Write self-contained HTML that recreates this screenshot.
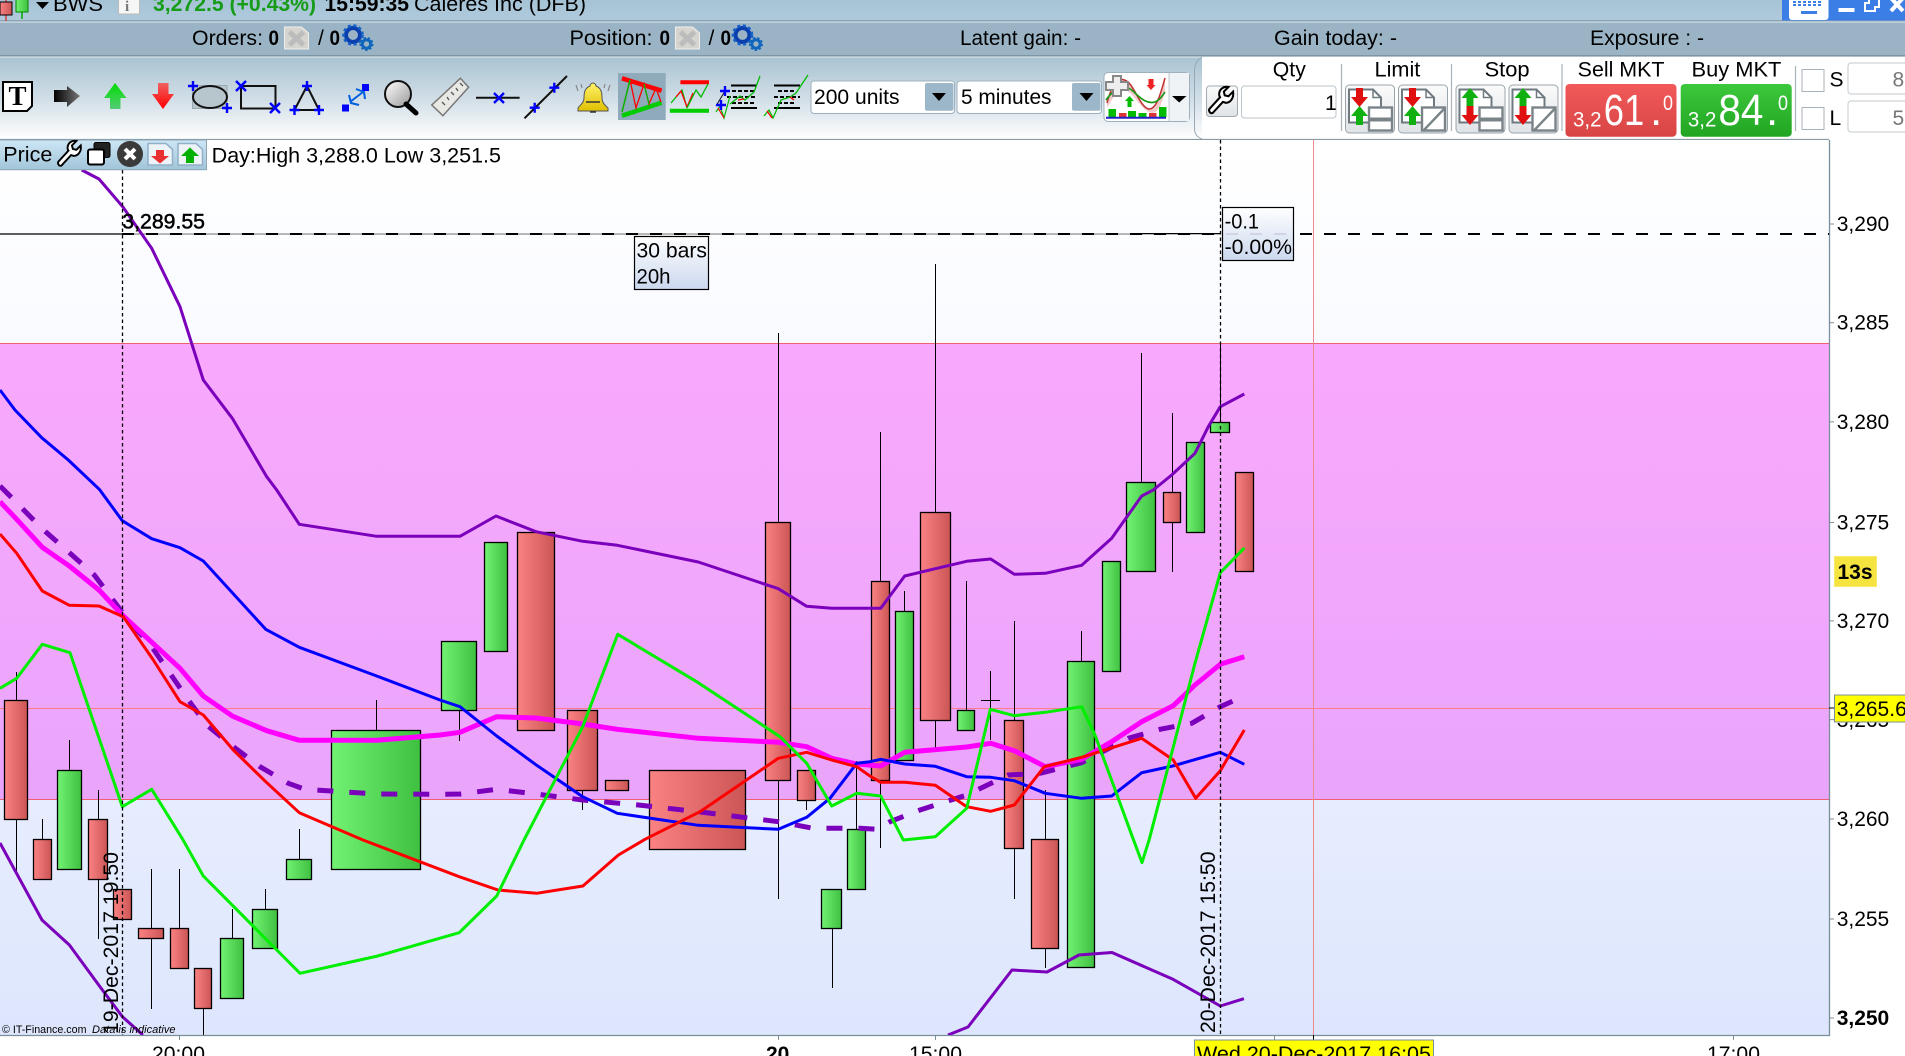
<!DOCTYPE html>
<html><head><meta charset="utf-8"><title>BWS Chart</title>
<style>
html,body{margin:0;padding:0;background:#fff;width:1905px;height:1056px;overflow:hidden}
svg{display:block}
text{font-family:"Liberation Sans",sans-serif;font-size:21px;fill:#000}
.b{font-weight:bold}
.r{fill:url(#rg);stroke:#000;stroke-width:1.3}
.g{fill:url(#gg);stroke:#000;stroke-width:1.3}
.l{fill:none;stroke-linejoin:round;stroke-linecap:butt}
.cross{stroke:#0000ff;stroke-width:2.4;fill:none}
</style></head><body>
<svg width="1905" height="1056" viewBox="0 0 1905 1056" xmlns="http://www.w3.org/2000/svg">
<defs>
<linearGradient id="rg"><stop offset="0" stop-color="#fb8282"/><stop offset="1" stop-color="#cb5555"/></linearGradient>
<linearGradient id="gg"><stop offset="0" stop-color="#72f272"/><stop offset="1" stop-color="#40c040"/></linearGradient>
<linearGradient id="bgc" x1="0" y1="0" x2="0" y2="1"><stop offset="0" stop-color="#ffffff"/><stop offset=".25" stop-color="#f8faff"/><stop offset="1" stop-color="#dde6fd"/></linearGradient>
<linearGradient id="pk" x1="0" y1="0" x2="0" y2="1"><stop offset="0" stop-color="#f9a9fd"/><stop offset="1" stop-color="#e9a5fb"/></linearGradient>
<linearGradient id="top1" x1="0" y1="0" x2="0" y2="1"><stop offset="0" stop-color="#a6c3d6"/><stop offset="1" stop-color="#afcadc"/></linearGradient>
<linearGradient id="tb" x1="0" y1="0" x2="0" y2="1"><stop offset="0" stop-color="#a9c3d2"/><stop offset=".55" stop-color="#d4e0e8"/><stop offset="1" stop-color="#ffffff"/></linearGradient>
<linearGradient id="tab" x1="0" y1="0" x2="0" y2="1"><stop offset="0" stop-color="#cde6f5"/><stop offset="1" stop-color="#a2c5d9"/></linearGradient>
<linearGradient id="tip" x1="0" y1="0" x2="0" y2="1"><stop offset="0" stop-color="#ffffff"/><stop offset="1" stop-color="#cbd8ee"/></linearGradient>
<linearGradient id="sell" x1="0" y1="0" x2="0" y2="1"><stop offset="0" stop-color="#f25a5a"/><stop offset="1" stop-color="#d84444"/></linearGradient>
<linearGradient id="buy" x1="0" y1="0" x2="0" y2="1"><stop offset="0" stop-color="#3cc83c"/><stop offset="1" stop-color="#22a522"/></linearGradient>
<linearGradient id="btn" x1="0" y1="0" x2="0" y2="1"><stop offset="0" stop-color="#fbfbfb"/><stop offset="1" stop-color="#dfe3e6"/></linearGradient>
<linearGradient id="ua" x1="0" y1="0" x2="0" y2="1"><stop offset="0" stop-color="#00dd00"/><stop offset="1" stop-color="#55cc77"/></linearGradient>
<linearGradient id="da" x1="0" y1="1" x2="0" y2="0"><stop offset="0" stop-color="#ff0000"/><stop offset="1" stop-color="#f06060"/></linearGradient>
<linearGradient id="ka"><stop offset="0" stop-color="#000"/><stop offset="1" stop-color="#777"/></linearGradient>
<linearGradient id="bell" x1="0" y1="0" x2="0" y2="1"><stop offset="0" stop-color="#fff26a"/><stop offset="1" stop-color="#e0c000"/></linearGradient>
<linearGradient id="mag" x1="0" y1="0" x2="1" y2="1"><stop offset="0" stop-color="#ffffff"/><stop offset="1" stop-color="#999"/></linearGradient>
<clipPath id="ch"><rect x="0" y="140" width="1829" height="895"/></clipPath>
<g id="wr"><path d="M27 5l-5 5-4-1-1-4 5-5c-5-1-10 2-10 8 0 1 0 2 1 3L2 23c-2 2 0 6 3 5l11-12c1 0 2 1 3 1 5 0 9-5 8-12z"/></g>
<g id="gear"><circle cx="353" cy="35" r="7" fill="none" stroke="#0b3fae" stroke-width="4"/><circle cx="353" cy="35" r="9.5" fill="none" stroke="#1560c8" stroke-width="2.6" stroke-dasharray="3 2.6"/><circle cx="366.5" cy="44" r="4.2" fill="none" stroke="#0f66bb" stroke-width="3"/><circle cx="366.5" cy="44" r="6" fill="none" stroke="#0f66bb" stroke-width="2" stroke-dasharray="2.2 2"/></g>
<g id="xdoc"><path d="M0 0H17L24 6V22H0Z" fill="#d6d4ce" stroke="#eeeeea"/><path d="M5 5L19 18M19 5L5 18" stroke="#bcbcbc" stroke-width="5"/></g>
<g id="doc"><rect x="0.5" y="0.5" width="49" height="48" rx="4" fill="url(#btn)" stroke="#9aa5ab"/><path d="M4 5H28L36 13V38H4Z" fill="#fff" stroke="#6f7a80" stroke-width="2"/><path d="M28 5V13H36" fill="none" stroke="#6f7a80" stroke-width="1.5"/><rect x="24" y="23" width="23" height="23" fill="#fff" stroke="#7a8488" stroke-width="2.4"/></g>
<path id="dn" d="M0 9H5V0H12V9H17L8.5 19Z"/>
<path id="up" d="M0 10H5V19H12V10H17L8.5 0Z"/>
</defs>

<!-- top rows -->
<rect width="1905" height="21" fill="url(#top1)"/>
<rect y="20" width="1905" height="2" fill="#8ba2b0"/>
<rect y="21.5" width="1905" height="1" fill="#dfe8ee"/>
<rect y="22.5" width="1905" height="33" fill="#9ab4c6"/>
<rect y="55" width="1905" height="1.5" fill="#7f95a2"/>
<rect y="56.5" width="1905" height="83" fill="url(#tb)"/>
<rect y="56.5" width="1905" height="1" fill="#e2ebf0"/>

<!-- row1 -->
<path d="M6 0V21" stroke="#c44" stroke-width="1.5"/><rect x="0" y="2" width="12" height="13" fill="url(#rg)" stroke="#000"/>
<path d="M22 0V19" stroke="#0a0" stroke-width="1.5"/><rect x="16" y="-1" width="12" height="13" fill="url(#gg)" stroke="#080"/>
<path d="M36 2H49L42.5 9Z" fill="#000"/>
<text x="53" y="11" textLength="50" lengthAdjust="spacingAndGlyphs">BWS</text>
<rect x="118.5" y="-2" width="21" height="16" fill="#f6f6f6" stroke="#bbb"/><text x="125" y="11" style="font-family:'Liberation Serif',serif;font-size:15px;font-weight:bold;fill:#777">i</text>
<text x="153" y="11" class="b" style="fill:#169c16" textLength="163" lengthAdjust="spacingAndGlyphs">3,272.5 (+0.43%)</text>
<text x="324.5" y="11" class="b" textLength="84.5" lengthAdjust="spacingAndGlyphs">15:59:35</text>
<text x="414" y="11" textLength="172" lengthAdjust="spacingAndGlyphs">Caleres Inc (DFB)</text>
<rect x="1782" y="0" width="123" height="20.5" fill="#3b7fe6"/>
<rect x="1789" y="-4" width="39.5" height="24" rx="3" fill="#fff"/>
<path d="M1793 2h3M1798 2h3M1803 2h3M1808 2h3M1813 2h3M1818 2h3M1793 5h3M1798 5h3M1803 5h3M1808 5h3M1813 5h3M1818 5h3" stroke="#3b7fe6" stroke-width="2"/>
<rect x="1801" y="11" width="16" height="3" fill="#3b7fe6"/>
<rect x="1838.5" y="8" width="16" height="4" fill="#fff"/>
<path d="M1869 0V3H1865V11H1875V7H1879V0" fill="none" stroke="#fff" stroke-width="2"/>
<path d="M1891 -2L1903 11M1903 -2L1891 11" stroke="#fff" stroke-width="4"/>

<!-- row2 -->
<text x="192" y="45" textLength="71" lengthAdjust="spacingAndGlyphs">Orders:</text>
<text x="268.5" y="45" class="b" textLength="10.5" lengthAdjust="spacingAndGlyphs">0</text>
<use href="#xdoc" x="284.5" y="27"/>
<text x="318" y="45">/</text><text x="329.5" y="45" class="b" textLength="10.5" lengthAdjust="spacingAndGlyphs">0</text>
<use href="#gear"/>
<text x="569.5" y="45" textLength="83" lengthAdjust="spacingAndGlyphs">Position:</text>
<text x="659.5" y="45" class="b" textLength="10.5" lengthAdjust="spacingAndGlyphs">0</text>
<use href="#xdoc" x="675.5" y="27"/>
<text x="708.5" y="45">/</text><text x="720.5" y="45" class="b" textLength="10.5" lengthAdjust="spacingAndGlyphs">0</text>
<use href="#gear" x="389.5"/>
<text x="960" y="45" textLength="121" lengthAdjust="spacingAndGlyphs">Latent gain: -</text>
<text x="1274" y="45" textLength="123" lengthAdjust="spacingAndGlyphs">Gain today: -</text>
<text x="1590" y="45" textLength="114" lengthAdjust="spacingAndGlyphs">Exposure : -</text>

<!-- toolbar icons -->
<path d="M3 82H32V106L27 111H3Z" fill="#fff" stroke="#000" stroke-width="2"/><text x="8.5" y="105" style="font-family:'Liberation Serif',serif;font-weight:bold;font-size:27px">T</text>
<path d="M54 90H67V86L80 96L67 107V102H54Z" fill="url(#ka)"/>
<path d="M104 98L115 83L126.5 98H120.5V109H110V98Z" fill="url(#ua)"/>
<path d="M152 94H158V83H168.5V94H174L163 109Z" fill="url(#da)"/>
<rect x="192.5" y="85.5" width="34.5" height="23" fill="#b7c5cd" stroke="#9aa8b0"/>
<ellipse cx="210" cy="97" rx="17" ry="11" fill="none" stroke="#111" stroke-width="2"/>
<path class="cross" d="M193 81V91M188 86H198M227 103V113M222 108H232"/>
<rect x="241" y="86" width="34.5" height="22.5" fill="none" stroke="#111" stroke-width="2"/>
<path class="cross" d="M236 81L246 91M246 81L236 91M270 103L280 113M280 103L270 113"/>
<path d="M307 86L294.5 110H319Z" fill="none" stroke="#111" stroke-width="2"/>
<path class="cross" d="M307 81V91M302 86H312M294.5 105V115M289.5 110H299.5M319 105V115M314 110H324"/>
<rect x="362" y="84" width="7" height="7" fill="#00f"/><rect x="342" y="104.5" width="7" height="7" fill="#00f"/>
<path d="M350 102L363 92M349 95L351 103L359 105M356 89L364 92L365 99" stroke="#0060e0" stroke-width="2" fill="none"/>
<circle cx="398" cy="94" r="13" fill="url(#mag)" stroke="#111" stroke-width="2"/><path d="M406 104L416 113" stroke="#000" stroke-width="5" stroke-linecap="round"/>
<path d="M460.4 78.3L468.6 87.3L442.9 115.7L431.8 105Z" fill="#e8e8e4" stroke="#777" stroke-width="1.5"/>
<path d="M442 102l3 3M447 97l2 3M451 92l3 3M456 88l2 3M460 83l3 3" stroke="#555" stroke-width="1.3"/>
<path d="M476 97.7H519.6" stroke="#111" stroke-width="2"/><path class="cross" d="M494 93L504 103M504 93L494 103"/>
<path d="M524.5 118.3L567 76" stroke="#111" stroke-width="2"/><path class="cross" d="M534.7 102.7V112.7M529.7 107.7H539.7M554.3 82.7V92.7M549.3 87.7H559.3"/>
<path d="M593 83c-2 0-3 2-3 3-5 2-6 6-6 12 0 5-4 7-6 10v3h30v-3c-3-3-6-5-6-10 0-6-1-10-6-12 0-1-1-3-3-3z" fill="url(#bell)" stroke="#555" stroke-width="1"/><path d="M586 102H600M590 112H596" stroke="#333" stroke-width="1.5"/>
<path d="M576 85l2 6M610 85l-2 6M581 84l1 4M605 84l-1 4" stroke="#888" stroke-width="1.2"/>
<rect x="618" y="73" width="47.7" height="47" fill="#8faabb"/>
<path d="M622 78.3L661.6 90.7" stroke="#f00" stroke-width="4.5"/><path d="M622 115.7L661.6 102.7" stroke="#0c0" stroke-width="4.5"/>
<path d="M622 112L630 80L636 108L644 84L649 104L656 88L661 102" fill="none" stroke="#f00" stroke-width="1.3"/>
<path d="M622 112L630 80" stroke="#0b0" stroke-width="1.5"/><path d="M644 84L649 104" stroke="#0b0" stroke-width="1.3"/>
<path d="M680.4 82.3H709" stroke="#f00" stroke-width="4"/><path d="M669.8 110.7H709" stroke="#0c0" stroke-width="4"/>
<path d="M671 103L682 90L687 108" fill="none" stroke="#0b0" stroke-width="1.3"/><path d="M676 97L681 91L687 107L693 93" fill="none" stroke="#f00" stroke-width="1.3"/><path d="M687 108L696 90L701 97L708 84" fill="none" stroke="#0b0" stroke-width="1.3"/>
<path d="M731 85.5H757M731 108H757" stroke="#000" stroke-width="2"/>
<path d="M732 91H755M727 97H757M732 103H755" stroke="#000" stroke-width="2" stroke-dasharray="4 2"/>
<path d="M716 112L720 106L724 118L730 96" fill="none" stroke="#0b0" stroke-width="1.2"/><path d="M718 108L724 118" stroke="#f00" stroke-width="1.2"/>
<path d="M730 104L740 96L745 100L754 92L760 76" fill="none" stroke="#0b0" stroke-width="1.3"/><path d="M738 100L744 99" stroke="#f00" stroke-width="1.3"/>
<path d="M725 91L716 106" stroke="#111" stroke-width="1"/><path class="cross" d="M725 86V96M720 91H730M721 100V110M716 105H726"/>
<path d="M774 85.5H800M774 108H800" stroke="#000" stroke-width="2"/>
<path d="M778 91H796M774 97H800M778 103H796" stroke="#000" stroke-width="2" stroke-dasharray="4 2"/>
<path d="M764 116L769 110L773 118L781 100L790 97L796 93L808 75" fill="none" stroke="#0b0" stroke-width="1.3"/><path d="M767 111L772 118M790 97L794 100" stroke="#f00" stroke-width="1.3"/>

<!-- combos -->
<rect x="811" y="81" width="143.5" height="32.5" rx="3" fill="#fff" stroke="#9db0bd"/>
<rect x="925" y="83" width="28.5" height="27.7" rx="2" fill="#9bb7c9"/><path d="M932 93H946L939 101Z" fill="#000"/>
<text x="814" y="104" textLength="85.5" lengthAdjust="spacingAndGlyphs">200 units</text>
<rect x="957" y="81" width="144.5" height="32.5" rx="3" fill="#fff" stroke="#9db0bd"/>
<rect x="1072" y="83" width="28.5" height="27.7" rx="2" fill="#9bb7c9"/><path d="M1079.5 93H1093.5L1086.5 101Z" fill="#000"/>
<text x="961" y="104" textLength="90.5" lengthAdjust="spacingAndGlyphs">5 minutes</text>
<!-- indicator button -->
<rect x="1104" y="72.5" width="85.5" height="49" rx="4" fill="#fff" stroke="#9db0bd"/>
<rect x="1169" y="73" width="20" height="48" fill="#f0f3f5"/><path d="M1169 73V121" stroke="#bcc8d0"/>
<path d="M1172 96H1186.5L1179.2 102.5Z" fill="#000"/>
<path d="M1107 103C1113 80 1120 76 1128 82C1135 88 1141 108 1149 109C1157 109 1161 92 1165 78L1165 92C1160 110 1156 115 1149 112C1140 108 1132 90 1124 90C1116 90 1112 100 1107 108Z" fill="#f3c9c9"/>
<path d="M1107 103C1113 80 1120 76 1128 82C1135 88 1141 108 1149 109C1157 109 1161 92 1165 78" fill="none" stroke="#c03030" stroke-width="1.5"/>
<path d="M1106 100C1116 86 1126 84 1134 92C1142 100 1148 104 1155 102C1160 100 1162 96 1165 92" fill="none" stroke="#1a9a1a" stroke-width="1.7"/>
<path d="M1106 82H1113V76H1121V82H1128V90H1121V96H1113V90H1106Z" fill="#eee" stroke="#888" stroke-width="2"/>
<path d="M1125 101L1129.5 96L1134 101H1131.5V107H1127.5V101Z" fill="#0b0"/><path d="M1148.5 79H1153.5V85H1155.5L1151 90L1146.5 85H1148.5Z" fill="#e22"/>
<rect x="1108.5" y="109" width="7.5" height="8" fill="#0b0"/><rect x="1119" y="113" width="7.5" height="4" fill="#d33"/><rect x="1128" y="111" width="8" height="6" fill="#0b0"/><rect x="1138.5" y="113" width="8" height="4" fill="#0b0"/><rect x="1149" y="113" width="7.5" height="4" fill="#d33"/><rect x="1159" y="107" width="7.5" height="10" fill="#0b0"/>
<path d="M1106 117.7H1166" stroke="#22c" stroke-width="2"/>
<path d="M1197.5 94L1201.5 98L1197.5 102Z" fill="#000"/>

<!-- right panel -->
<path d="M1905 57H1202C1197 60 1194.5 64 1194.5 70V128C1194.5 134 1197 137 1202 139H1905Z" fill="#fff"/>
<path d="M1202 57C1197 60 1194.5 64 1194.5 70V128C1194.5 134 1197 137 1202 139" fill="url(#tb)" stroke="#95a8b4"/>
<rect x="1206.5" y="86" width="31" height="30.5" rx="3" fill="url(#btn)" stroke="#a0aab0"/>
<use href="#wr" transform="translate(1208,87) scale(.93)" fill="#fff" stroke="#000" stroke-width="2.2"/>
<rect x="1241.5" y="86" width="94.5" height="32" rx="3" fill="#fff" stroke="#bcc5ca"/>
<text x="1325" y="110">1</text>
<text x="1272.8" y="76.7" textLength="33" lengthAdjust="spacingAndGlyphs">Qty</text>
<text x="1374.5" y="76.7" textLength="45.8" lengthAdjust="spacingAndGlyphs">Limit</text>
<text x="1484.6" y="76.7" textLength="45" lengthAdjust="spacingAndGlyphs">Stop</text>
<text x="1577.7" y="76.7" textLength="86.8" lengthAdjust="spacingAndGlyphs">Sell MKT</text>
<text x="1691.5" y="76.7" textLength="89.9" lengthAdjust="spacingAndGlyphs">Buy MKT</text>
<path d="M1341.5 64V131M1451.5 64V131M1562 64V131M1795.5 66V131" stroke="#a9b4ba" stroke-width="1.2"/>
<!-- limit/stop buttons -->
<g>
<use href="#doc" x="1345" y="84.5"/><use href="#dn" x="1351" y="88" fill="#e01010"/><use href="#up" x="1351" y="106" fill="#10b010"/>
<path d="M1370 119.5H1391" stroke="#7a8488" stroke-width="4"/>
<use href="#doc" x="1398" y="84.5"/><use href="#dn" x="1404" y="88" fill="#e01010"/><use href="#up" x="1404" y="106" fill="#10b010"/>
<path d="M1423 131L1444 109" stroke="#7a8488" stroke-width="2.4"/>
<use href="#doc" x="1455.5" y="84.5"/><use href="#up" x="1461.5" y="88" fill="#10b010"/><use href="#dn" x="1461.5" y="106" fill="#e01010"/>
<path d="M1480.5 119.5H1501.5" stroke="#7a8488" stroke-width="4"/>
<use href="#doc" x="1508.5" y="84.5"/><use href="#up" x="1514.5" y="88" fill="#10b010"/><use href="#dn" x="1514.5" y="106" fill="#e01010"/>
<path d="M1533.5 131L1554.5 109" stroke="#7a8488" stroke-width="2.4"/>
</g>
<rect x="1565.5" y="84" width="111" height="52.7" rx="4" fill="url(#sell)"/>
<text x="1573" y="126.5" style="fill:#fff" textLength="28.5" lengthAdjust="spacingAndGlyphs">3,2</text>
<text x="1603.8" y="125" style="fill:#fff;font-size:44px" textLength="40.5" lengthAdjust="spacingAndGlyphs">61</text>
<text x="1650" y="125" style="fill:#fff;font-size:44px">.</text>
<text x="1663" y="110" style="fill:#fff" textLength="10" lengthAdjust="spacingAndGlyphs">0</text>
<rect x="1680.7" y="84" width="111" height="52.7" rx="4" fill="url(#buy)"/>
<text x="1687.9" y="126.5" style="fill:#fff" textLength="28.5" lengthAdjust="spacingAndGlyphs">3,2</text>
<text x="1718.4" y="125" style="fill:#fff;font-size:44px" textLength="45" lengthAdjust="spacingAndGlyphs">84</text>
<text x="1766" y="125" style="fill:#fff;font-size:44px">.</text>
<text x="1778" y="110" style="fill:#fff" textLength="10" lengthAdjust="spacingAndGlyphs">0</text>
<rect x="1802" y="69.5" width="22" height="22" fill="#fff" stroke="#a8b2b8"/>
<rect x="1802" y="107.5" width="22" height="22" fill="#fff" stroke="#a8b2b8"/>
<text x="1829.5" y="86.7">S</text><text x="1829.5" y="125">L</text>
<rect x="1848" y="63" width="70" height="31" rx="3" fill="#fff" stroke="#c2cace"/>
<rect x="1848" y="101" width="70" height="31" rx="3" fill="#fff" stroke="#c2cace"/>
<text x="1892.5" y="86.7" style="fill:#777">8</text><text x="1892.5" y="125" style="fill:#777">5</text>
<path d="M0 139.5H1829" stroke="#8a9ba5" stroke-width="1.2"/>

<!-- chart bg -->
<rect x="0" y="140" width="1829" height="895" fill="url(#bgc)"/>
<rect x="0" y="343.5" width="1829" height="456" fill="url(#pk)"/>
<path d="M0 343.5H1829M0 799.5H1829" stroke="#ee5f6f" stroke-width="1"/>
<path d="M0 708.5H1829" stroke="#ff7c88" stroke-width="1"/>
<path d="M1829.5 140V1035.5H0" fill="none" stroke="#7b8f9b" stroke-width="1.3"/>
<path d="M1829 224H1834M1829 322.7H1834M1829 421.9H1834M1829 522.5H1834M1829 620.9H1834M1829 719.6H1834M1829 819H1834M1829 919H1834M1829 1018H1834" stroke="#7b8f9b"/>
<path d="M179.5 1035V1040M778.5 1035V1040M935.5 1035V1040M1274.5 1035V1040M1733.5 1035V1040" stroke="#7b8f9b"/>
<path d="M1313.5 1035V1040" stroke="#000"/>
<path d="M1313.5 140V1035" stroke="#f08a8a" stroke-width="1"/>

<!-- horizontal level -->
<path d="M0 234H122" stroke="#000" stroke-width="1.3"/>
<path d="M122 234H1220" stroke="#a0a0a0" stroke-width="1.5"/>
<path d="M122 234H1220" stroke="#000" stroke-width="2" stroke-dasharray="12 12"/>
<path d="M1140 233.5H1220" stroke="#000" stroke-width="1"/>
<path d="M1228 234H1829" stroke="#000" stroke-width="2" stroke-dasharray="12 12"/>

<!-- wicks -->
<path shape-rendering="crispEdges" stroke="#000" stroke-width="1.3" fill="none" d="M16.5 672V700M16.5 819V872M42.5 819V839M69.5 740V770M98.5 790V819M98.5 879V939M151.5 869V1009M179.5 869V928M203.5 1008V1035M232.5 909V938M265.5 889V909M299.5 829V859M376.5 700V730M459.5 710V741M582.5 790V810M778.5 333V522M778.5 780V899M806.5 800V810M832.5 928V988M856.5 761V829M880.5 432V581M880.5 780V848M904.5 591V611M935.5 264V512M935.5 720V748M966.5 581V710M990.5 671V740M981 700.5H1000M1014.5 621V720M1014.5 848V899M1045.5 790V839M1045.5 948V968M1081.5 631V661M1141.5 353V482M1172.5 413V492M1172.5 522V572M1220.5 343V422"/>
<!-- candles -->
<rect class="r" x="4.5" y="700.5" width="23" height="119"/>
<rect class="r" x="33.5" y="839.5" width="18" height="40"/>
<rect class="g" x="57.5" y="770.5" width="24" height="99"/>
<rect class="r" x="88.5" y="819.5" width="19" height="60"/>
<rect class="r" x="113.5" y="889.5" width="18" height="30"/>
<rect class="r" x="138.5" y="928.5" width="25" height="10"/>
<rect class="r" x="170.5" y="928.5" width="18" height="40"/>
<rect class="r" x="194.5" y="968.5" width="17" height="40"/>
<rect class="g" x="220.5" y="938.5" width="23" height="60"/>
<rect class="g" x="252.5" y="909.5" width="25" height="39"/>
<rect class="g" x="286.5" y="859.5" width="25" height="20"/>
<rect class="g" x="331.5" y="730.5" width="89" height="139"/>
<rect class="g" x="441.5" y="641.5" width="35" height="69"/>
<rect class="g" x="484.5" y="542.5" width="23" height="109"/>
<rect class="r" x="517.5" y="532.5" width="37" height="198"/>
<rect class="r" x="567.5" y="710.5" width="30" height="80"/>
<rect class="r" x="605.5" y="780.5" width="23" height="10"/>
<rect class="r" x="649.5" y="770.5" width="96" height="79"/>
<rect class="r" x="765.5" y="522.5" width="25" height="258"/>
<rect class="r" x="797.5" y="770.5" width="18" height="30"/>
<rect class="g" x="821.5" y="889.5" width="20" height="39"/>
<rect class="g" x="847.5" y="829.5" width="18" height="60"/>
<rect class="r" x="871.5" y="581.5" width="18" height="199"/>
<rect class="g" x="895.5" y="611.5" width="18" height="149"/>
<rect class="r" x="920.5" y="512.5" width="30" height="208"/>
<rect class="g" x="957.5" y="710.5" width="17" height="20"/>
<rect class="r" x="1004.5" y="720.5" width="19" height="128"/>
<rect class="r" x="1031.5" y="839.5" width="27" height="109"/>
<rect class="g" x="1067.5" y="661.5" width="27" height="306"/>
<rect class="g" x="1102.5" y="561.5" width="18" height="110"/>
<rect class="g" x="1126.5" y="482.5" width="29" height="89"/>
<rect class="r" x="1163.5" y="492.5" width="17" height="30"/>
<rect class="g" x="1186.5" y="442.5" width="18" height="90"/>
<rect class="g" x="1210.5" y="422.5" width="19" height="10"/>
<rect class="r" x="1235.5" y="472.5" width="18" height="99"/>

<!-- indicator lines -->
<g clip-path="url(#ch)">
<polyline class="l" stroke="#7b00bb" stroke-width="3" points="81.7,170 99,179 122.7,206.7 151.7,248.3 180,306.7 203.3,380 232.3,418.3 266.7,476.7 276.7,490 299.3,524.3 376.7,536.3 460,536.3 496,516 536,531.7 582.7,541.3 617.3,545.3 698.3,562 778.3,588.7 806.7,606.3 831.7,608.3 880.7,608.3 904.7,576 935.3,568.7 966.7,561.3 990.7,559 1014.3,574.3 1045.3,573.3 1081.7,565.3 1111.7,538.3 1141.7,496 1153.3,490 1171.7,475 1195,453.3 1208.3,426.7 1220.3,406.7 1244.3,394"/>
<polyline class="l" stroke="#7b00bb" stroke-width="3" points="0,843 42,920 69.4,945 100,986.7 122.4,1016.7 142.9,1035"/>
<polyline class="l" stroke="#7b00bb" stroke-width="3" points="948,1035 968,1027 1012,970 1047,972 1079,955 1112,952.5 1173,979.3 1220.3,1006 1243.9,998.7"/>
<polyline class="l" stroke="#7b00bb" stroke-width="5" stroke-dasharray="16 16" points="0,486 14,500 41.7,528.3 68.3,551.7 94.3,575 125,616 151.7,646.7 188.3,700 206.7,725 233.3,746.7 260,766.7 288.3,783.3 305,789.3 376.7,794 440,794.3 460,794 496.7,789.3 536,794 582.7,800 638.3,805 698.3,811.7 778.3,821.7 813.3,828.3 860,828.3 876.7,829.3 890,821.7 920,810 966.7,795 1008.3,775 1040,773.3 1081.7,762.7 1128.3,738.3 1160,729.3 1191.7,723.3 1220.3,706.7 1244.3,696"/>
<polyline class="l" stroke="#ff00ff" stroke-width="5" points="0,501.7 16.7,519.3 42.3,547.3 69.3,566 99,590 122.3,615 180,668.3 203.3,696 232.3,716 266.7,730.7 299.3,740.3 376.7,740.3 440,735 460,732.3 496.7,716.7 536,718 582.7,724 617.3,729.3 698.3,738.3 778.3,742.3 806.7,746.7 831.7,758.3 856.7,764 880.7,766 904.7,752.3 966.7,747 990.7,743.3 1014.3,750.7 1045.3,766.7 1081.7,759.3 1111.7,741.7 1141.7,721.7 1173.3,705.7 1195,685 1220.3,664.3 1244.3,656.7"/>
<polyline class="l" stroke="#0000ff" stroke-width="3" points="0,390 15,410 41.7,437.7 68.3,460 99.3,489.3 122.3,520.7 151.7,538.7 180,547.7 203.3,561 265.7,629.3 299.3,647.3 376.7,676 440,700 460,706.7 496.7,736 536.7,765.3 582.7,796.7 617.3,813.3 698.3,825.3 778.3,829.3 806.7,817.3 830,798.3 856.7,763.3 870,761.7 880.7,759.3 904.7,764 935.3,766.3 966.7,776.7 990.7,777.3 1014.3,780.7 1045.3,793.3 1081.7,798.3 1111.7,796 1141.7,772.7 1172.7,766 1220.3,752.3 1244.3,764.3"/>
<polyline class="l" stroke="#ff0000" stroke-width="3" points="0,534 16.7,553.3 42.3,591 69.3,605.3 99,606 123.3,616.7 153.3,660 180,701.7 203.3,715 233.3,750 265.7,781.7 299.3,812.7 363,840 459.2,876.7 498,890 536.7,893.3 582.9,886 618.4,855 645,839.3 700,811.7 778.3,758.3 806.7,752.3 831.7,760 856.7,766.7 870,776 880.7,782.3 904.7,782.3 935.3,785.3 966.7,806.7 990.7,811.3 1014.3,805 1044.3,766.7 1081.7,757.3 1141.7,738.3 1173.3,760 1195.7,798.3 1220.3,770.7 1244.3,730"/>
<polyline class="l" stroke="#00ee00" stroke-width="3" points="0,688.3 16.7,678.3 42.3,644.3 70,652.7 122.3,806.7 151.7,789.3 182.7,839.3 203.3,876 300,973.3 377.6,956 459.2,932.7 496.7,896 524,840 582.7,726.7 617.7,634.3 698.3,682.7 780,736.7 806.7,763.3 831.7,806 856.7,793.3 880.7,796 903.3,840 935.3,836.7 966.7,808.3 990.3,709.3 1014.3,715.7 1045.3,712.3 1081.7,706.7 1095,735 1133.3,839.3 1142,862.6 1149.3,839.3 1195,663.3 1220.3,572.7 1244.3,548"/>
<path d="M122.5 170V1035" stroke="#000" stroke-width="1.3" stroke-dasharray="3.5 3"/>
<path d="M1220.5 140V1035" stroke="#000" stroke-width="1.3" stroke-dasharray="3.5 3"/>
<text transform="translate(118,1034) rotate(-90)" textLength="182" lengthAdjust="spacingAndGlyphs">19-Dec-2017 19:50</text>
<text transform="translate(1215,1033) rotate(-90)" textLength="181.5" lengthAdjust="spacingAndGlyphs">20-Dec-2017 15:50</text>
<text x="2" y="1033" style="font-size:11px" textLength="84.5" lengthAdjust="spacingAndGlyphs">© IT-Finance.com</text>
<text x="92" y="1033" style="font-size:11px;font-style:italic" textLength="83.5" lengthAdjust="spacingAndGlyphs">Data is indicative</text>
</g>

<!-- labels on chart -->
<text x="122.3" y="228.3" style="stroke:#000;stroke-width:.5" textLength="82.7" lengthAdjust="spacingAndGlyphs">3,289.55</text>
<rect x="634.5" y="236.5" width="74" height="53" fill="url(#tip)" stroke="#000" stroke-width="1.2"/>
<text x="636.5" y="257.7" textLength="70.5" lengthAdjust="spacingAndGlyphs">30 bars</text>
<text x="636.5" y="283.3" textLength="34" lengthAdjust="spacingAndGlyphs">20h</text>
<rect x="1222.5" y="207.5" width="71" height="53" fill="url(#tip)" stroke="#000" stroke-width="1.2"/>
<path d="M1226 234H1238M1250 234H1262M1274 234H1286" stroke="#ccd" stroke-width="1.5"/>
<text x="1224.6" y="228.3" textLength="34.4" lengthAdjust="spacingAndGlyphs">-0.1</text>
<text x="1224.6" y="254" textLength="67.4" lengthAdjust="spacingAndGlyphs">-0.00%</text>

<!-- price tab -->
<rect x="-1" y="140" width="207.5" height="29.7" fill="url(#tab)" stroke="#8aa5b6"/>
<text x="3.3" y="161.7" textLength="49" lengthAdjust="spacingAndGlyphs">Price</text>
<use href="#wr" transform="translate(57,141) scale(.88)" fill="#fff" stroke="#000" stroke-width="2.2"/>
<rect x="94" y="142.5" width="16" height="15" rx="2" fill="#222" stroke="#000"/>
<rect x="88" y="149.5" width="16" height="15" rx="2" fill="#fff" stroke="#000" stroke-width="2"/>
<circle cx="130" cy="154" r="13" fill="#3a3a3a"/><path d="M125 149L135 159M135 149L125 159" stroke="#fff" stroke-width="4"/>
<path d="M148 143.5H166L172.5 149.5V165H148Z" fill="#eef3f8" stroke="#8fb0c8" stroke-width="1.5"/><path d="M156 150H164V156H169L160 163.5L151 156H156Z" fill="#e83030"/>
<path d="M178 143.5H196L202.5 149.5V165H178Z" fill="#eef3f8" stroke="#8fb0c8" stroke-width="1.5"/><path d="M181 156L190 147.5L199 156H194V163H186V156Z" fill="#00b000"/>
<text x="211.7" y="162.7" textLength="289.3" lengthAdjust="spacingAndGlyphs">Day:High 3,288.0 Low 3,251.5</text>

<!-- price axis -->
<text x="1836.7" y="231">3,290</text>
<text x="1836.7" y="329.7">3,285</text>
<text x="1836.7" y="429">3,280</text>
<text x="1836.7" y="529.5">3,275</text>
<text x="1836.7" y="628">3,270</text>
<text x="1836.7" y="727">3,265</text>
<text x="1836.7" y="826">3,260</text>
<text x="1836.7" y="926">3,255</text>
<text x="1836.7" y="1025" class="b">3,250</text>
<path d="M1829 708H1834" stroke="#000"/>
<rect x="1834.5" y="695" width="80" height="27" fill="#ffff00" stroke="#7b8f9b"/>
<text x="1836.7" y="716">3,265.6</text>
<rect x="1834.5" y="556.5" width="42" height="30" fill="#f5e340" stroke="#f9ea6a"/>
<text x="1837.5" y="579" class="b">13s</text>

<!-- time axis -->
<text x="152" y="1061" textLength="53" lengthAdjust="spacingAndGlyphs">20:00</text>
<text x="766" y="1061" class="b">20</text>
<text x="909" y="1061" textLength="53" lengthAdjust="spacingAndGlyphs">15:00</text>
<text x="1707" y="1061" textLength="53" lengthAdjust="spacingAndGlyphs">17:00</text>
<rect x="1194.5" y="1040" width="239" height="20" fill="#ffff00" stroke="#7b8f9b"/>
<text x="1197" y="1061" textLength="234" lengthAdjust="spacingAndGlyphs">Wed 20-Dec-2017 16:05</text>
</svg>
</body></html>
